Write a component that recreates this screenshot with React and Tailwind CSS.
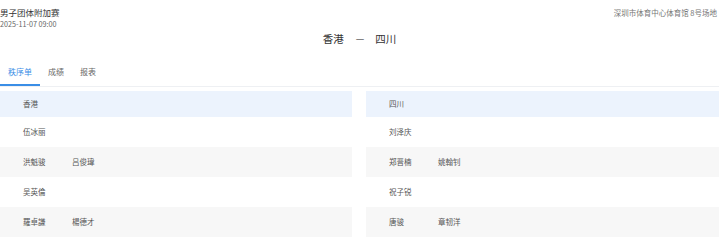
const home = {
  team: '香港',
  rows: [['伍冰丽'], ['洪魁骏', '吕俊瑋'], ['吴英倫'], ['羅卓謙', '楊德才']],
};

const away = {
  team: '四川',
  rows: [['刘泽庆'], ['郑晋楠', '姚翰钊'], ['祝子锐'], ['唐骏', '章韧洋']],
};

const tabs = ['秩序单', '成绩', '报表'];

const OrderColumn = ({ data }) => (
  <div className="flex flex-col">
    <div className="flex h-[26px] items-center bg-[#ecf3fd] pl-[23px] text-[7.5px] text-[#555]">
      {data.team}
    </div>
    {data.rows.map((names, i) => (
      <div
        key={i}
        className={`flex h-[30px] items-center pl-[23px] text-[7.5px] text-[#555] ${
          i % 2 === 1 ? 'bg-[#f7f7f7]' : 'bg-white'
        }`}
      >
        {names.map((n) => (
          <span key={n} className="w-[49px]">
            {n}
          </span>
        ))}
      </div>
    ))}
  </div>
);

export default function App() {
  return (
    <div
      className="h-[246px] w-[719px] overflow-hidden bg-white pt-[6px]"
      style={{ fontFamily: '"Noto Sans CJK SC", "Noto Sans", sans-serif' }}
    >
      {/* Header */}
      <div className="flex items-start justify-between">
        <div>
          <div className="text-[8.5px] leading-[13px] text-[#333]">男子团体附加赛</div>
          <div className="text-[7.2px] leading-[11px] text-[#666]">2025-11-07 09:00</div>
        </div>
        <div className="pr-[2px] pt-[2px] text-[7.5px] leading-[9px] text-[#777]">深圳市体育中心体育馆 8号场地</div>
      </div>

      {/* Teams */}
      <div className="flex h-[18px] items-center justify-center text-[10.5px] text-[#333]">
        <span>香港</span>
        <span className="ml-[11px] mr-[10px] text-[#666]">－</span>
        <span>四川</span>
      </div>

      {/* Tabs */}
      <div className="mt-[12px] flex border-b border-[#eef0f3]">
        {tabs.map((t, i) => (
          <div
            key={t}
            className={`flex h-[26px] items-center px-[8px] text-[8px] ${
              i === 0 ? 'border-b-2 border-[#3a8ee6] text-[#3a8ee6]' : 'border-b-2 border-transparent text-[#666]'
            }`}
          >
            {t}
          </div>
        ))}
      </div>

      {/* Order lists */}
      <div className="mt-[4px] grid grid-cols-[352px_1fr] gap-[14px]">
        <OrderColumn data={home} />
        <OrderColumn data={away} />
      </div>
    </div>
  );
}
